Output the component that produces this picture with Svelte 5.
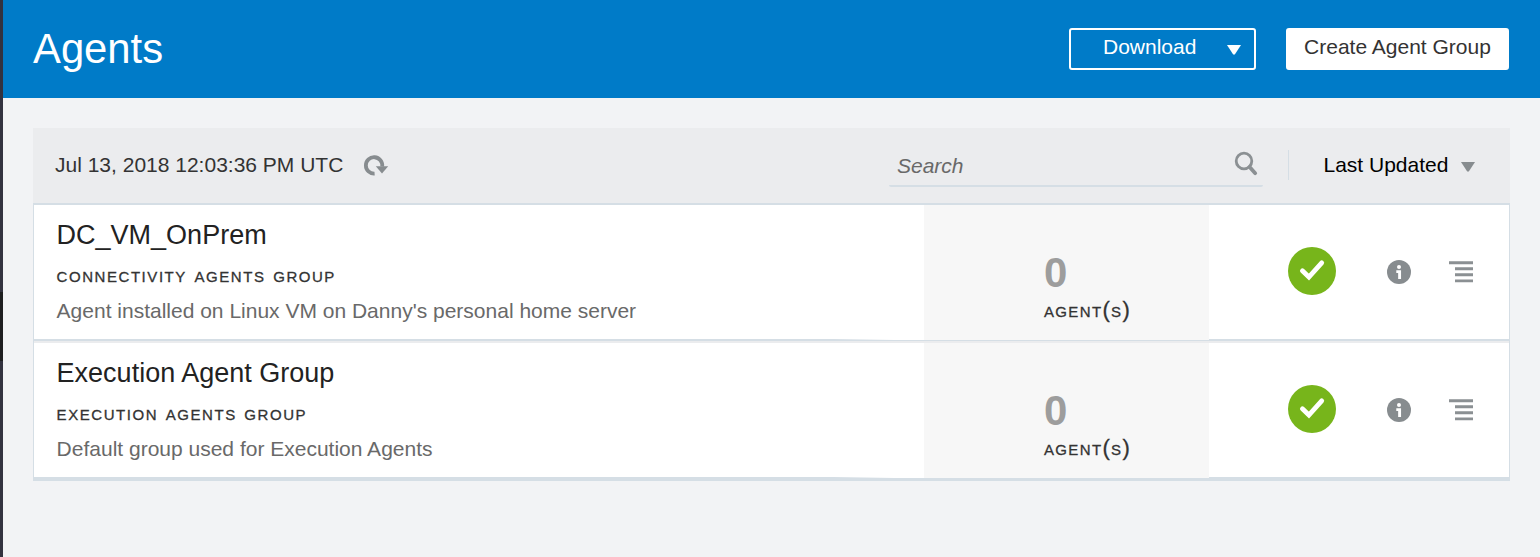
<script>
  const groups = [
    { name: 'DC_VM_OnPrem', type: 'connectivity agents group', description: "Agent installed on Linux VM on Danny's personal home server", agents: 0 },
    { name: 'Execution Agent Group', type: 'execution agents group', description: 'Default group used for Execution Agents', agents: 0 }
  ];
</script>

<div class="shell">
  <div class="rail"><span class="rail-mark"></span></div>
  <div class="page">
    <header>
      <h1>Agents</h1>
      <button class="download">
        <span>Download</span>
        <svg width="14" height="10" viewBox="0 0 14 10"><path d="M0 0H14L7.8 9.6H6.2Z" fill="#fff" /></svg>
      </button>
      <button class="create">Create Agent Group</button>
    </header>

    <main>
      <div class="toolbar">
        <span class="time">Jul 13, 2018 12:03:36 PM UTC</span>
        <svg class="refresh" width="26" height="24" viewBox="0 0 26 24">
          <path d="M11.6 19.6A8.2 8.2 0 1 1 19.2 12.5" fill="none" stroke="#878c8f" stroke-width="3.8" />
          <path d="M12.8 12.2H25.2L19 19.4Z" fill="#878c8f" />
        </svg>
        <div class="search">
          <span>Search</span>
          <svg width="24" height="26" viewBox="0 0 24 26">
            <circle cx="10" cy="10" r="7.8" fill="none" stroke="#8b9093" stroke-width="2.8" />
            <path d="M15.6 16L21.2 22.2" stroke="#8b9093" stroke-width="3.8" stroke-linecap="round" />
          </svg>
        </div>
        <div class="sort">
          <span>Last Updated</span>
          <svg width="14" height="10" viewBox="0 0 14 10"><path d="M0 0H14L7.8 9.6H6.2Z" fill="#878c8f" /></svg>
        </div>
      </div>

      <div class="list">
        {#each groups as group}
          <section class="row">
            <div class="info">
              <h2>{group.name}</h2>
              <div class="caps">{group.type}</div>
              <p>{group.description}</p>
            </div>
            <div class="count">
              <strong>{group.agents}</strong>
              <div class="caps">agent(s)</div>
            </div>
            <div class="actions">
              <svg class="ok" width="48" height="48" viewBox="0 0 48 48">
                <circle cx="24" cy="24" r="24" fill="#77b51b" />
                <path d="M14.4 23.8L20.9 30L33.7 15.9" fill="none" stroke="#fff" stroke-width="4.8" stroke-linecap="round" />
              </svg>
              <svg class="about" width="24" height="24" viewBox="0 0 24 24">
                <circle cx="12" cy="12" r="12" fill="#878c8f" />
                <circle cx="12" cy="7" r="2" fill="#fff" />
                <path d="M9.3 11.6H12.6V19" fill="none" stroke="#fff" stroke-width="2.9" />
              </svg>
              <svg class="menu" width="24" height="22" viewBox="0 0 24 22">
                <path d="M0 1.7H24M6 7.8H24M6 13.8H24M6 19.9H24" stroke="#8b9093" stroke-width="2.9" />
              </svg>
            </div>
          </section>
        {/each}
      </div>
    </main>
  </div>
</div>

<style>
  :global(body) { margin: 0; background: #f2f3f5; }
  .shell { display: flex; height: 557px; font: 21px/24px "Liberation Sans", Arial, sans-serif; color: #333; overflow: hidden; }
  svg { display: block; flex: none; }
  .rail { width: 3px; background: #33323f; padding-top: 292px; box-sizing: border-box; }
  .rail-mark { display: block; height: 69px; background: #1e1e20; }
  .page { flex: 1; background: #f2f3f5; }
  header { height: 98px; box-sizing: border-box; padding: 28px 31px 0 30px; background: #007bc8; display: flex; align-items: flex-start; }
  h1 { margin: -3px auto 0 0; font-size: 41.8px; line-height: 48px; font-weight: 400; color: #fff; }
  button { height: 42px; box-sizing: border-box; margin: 0; border: 2px solid #fff; border-radius: 3px; font: inherit; padding: 0; white-space: nowrap; }
  .download { width: 187px; padding: 0 13px 4px 32px; display: flex; align-items: center; justify-content: space-between; background: transparent; color: #fff; margin-right: 30px; }
  .download svg { margin-top: 5px; }
  .create { width: 223px; padding-bottom: 4px; background: #fff; color: #333; }
  main { margin: 30px 30px 0; }
  .toolbar { height: 75px; box-sizing: border-box; padding: 0 35px 2px 22px; display: flex; align-items: center; background: #ebecee; }
  .time { width: 308px; white-space: nowrap; }
  .refresh { margin-top: 2px; }
  .search { width: 374px; height: 42px; box-sizing: border-box; margin: 3px 25px 0 auto; padding: 2px 5px 0 8px; border-bottom: 2px solid #d5dee5; border-radius: 2px; display: flex; align-items: center; justify-content: space-between; font-style: italic; color: #696969; }
  .search svg { margin-top: -4px; }
  .sort { width: 187px; height: 30px; box-sizing: border-box; padding-left: 34.5px; border-left: 1px solid #d5dee5; display: flex; align-items: center; justify-content: space-between; color: #000; white-space: nowrap; }
  .sort svg { margin-top: 5px; }
  .list { border: 1px solid #d5dee5; border-top-width: 2px; border-bottom-width: 2px; }
  .row { display: flex; height: 138px; box-sizing: border-box; background: linear-gradient(#fff, #fff) 0 0 / 100% 134px no-repeat, linear-gradient(#d5dee5, #d5dee5) 0 134px / 100% 2px no-repeat, #ebecee; }
  .row:last-child { height: 136px; }
  .info { width: 890px; height: 135px; box-sizing: border-box; padding: 14px 0 0 22.6px; background: linear-gradient(90deg, transparent 800px, #fff 860px); }
  h2 { margin: 0; font-size: 27px; line-height: 32px; font-weight: 400; color: #222; }
  .caps { font-size: 22px; font-variant: small-caps; letter-spacing: 1.55px; line-height: 24px; margin-top: 12px; color: #333; white-space: nowrap; -webkit-text-stroke: 0.3px #333; }
  p { margin: 12px 0 0; color: #696969; white-space: nowrap; }
  .count { width: 285px; height: 135px; box-sizing: border-box; padding: 44px 0 0 120px; background: #f7f7f7; }
  .count strong { display: block; font-size: 42px; line-height: 48px; color: #9d9d9d; }
  .count .caps { margin-top: 0.6px; letter-spacing: 1.35px; }
  .actions { flex: 1; height: 134px; display: flex; align-items: center; padding-left: 79px; }
  .ok { margin-top: -2px; }
  .about { margin: 0 38px 0 51px; }
</style>
